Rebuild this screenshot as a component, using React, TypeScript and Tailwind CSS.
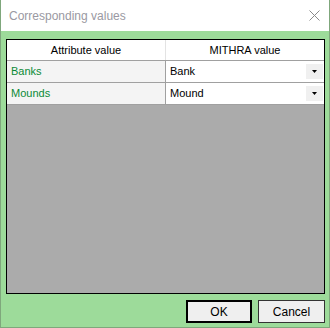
const rows = [
  { attr: "Banks", value: "Bank" },
  { attr: "Mounds", value: "Mound" },
]

function DropArrow() {
  return (
    <div className="flex h-[15px] w-[17px] items-center justify-center bg-[#f0f0f0]">
      <svg width="5" height="3" viewBox="0 0 5 3">
        <path d="M0 0H5L2.5 3Z" fill="#000" />
      </svg>
    </div>
  )
}

export default function App() {
  return (
    <div
      className="flex h-[328px] w-[330px] flex-col border-x border-b border-[#7fa77c] bg-[#9ddb9a] text-black"
      style={{ fontFamily: '"Liberation Sans", Arial, sans-serif' }}
    >
      <div className="flex h-[31px] shrink-0 items-center justify-between bg-white pl-2 pr-[9px]">
        <span className="text-[12px] text-[#9a99a2]">Corresponding values</span>
        <svg width="11" height="11" viewBox="0 0 11 11">
          <path d="M0.5 0.5L10.5 10.5M10.5 0.5L0.5 10.5" stroke="#8a8a8a" strokeWidth="1" />
        </svg>
      </div>

      <div className="flex flex-1 flex-col pl-[5px] pr-[4px] pt-[8px]">
        <div className="flex h-[255px] w-[319px] flex-col border border-black bg-[#ababab] text-[11px]">
          <div className="flex h-[21px] border-b border-[#a0a0a0] bg-white">
            <div className="flex w-[159px] items-center justify-center border-r border-[#e3e3e3]">
              Attribute value
            </div>
            <div className="flex flex-1 items-center justify-center">MITHRA value</div>
          </div>
          {rows.map((r) => (
            <div key={r.attr} className="flex h-[22px] border-b border-[#a0a0a0]">
              <div className="flex w-[159px] items-center border-r border-[#a0a0a0] bg-[#f4f4f4] pl-1 text-[#0b8a36]">
                {r.attr}
              </div>
              <div className="flex flex-1 items-center justify-between bg-white pl-1 pr-[1px]">
                <span>{r.value}</span>
                <DropArrow />
              </div>
            </div>
          ))}
        </div>

        <div className="mt-[6px] flex justify-end gap-[6px] text-[12px]">
          <button className="flex h-[23px] w-[66px] items-center justify-center border-2 border-black bg-[#efefef]">
            OK
          </button>
          <button className="flex h-[23px] w-[67px] items-center justify-center border border-[#333] bg-[#efefef]">
            Cancel
          </button>
        </div>
      </div>
    </div>
  )
}
